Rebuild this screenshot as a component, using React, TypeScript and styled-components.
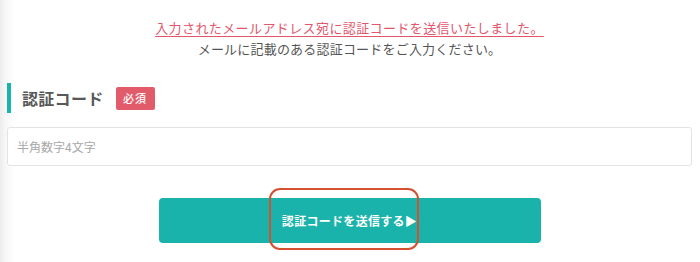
import styled, { createGlobalStyle } from 'styled-components';

const GlobalStyle = createGlobalStyle`
  html, body {
    margin: 0;
    padding: 0;
    background: #fff;
  }
  body {
    font-family: "Noto Sans CJK JP", "Noto Sans", sans-serif;
    color: #555;
  }
`;

const Page = styled.div`
  width: 700px;
  height: 262px;
  box-sizing: border-box;
  padding: 17px 8px 0 7px;
  background: linear-gradient(to right, #ececec 0px, #f8f8f8 6px, #fff 16px);
  overflow: hidden;
`;

const Notice = styled.div`
  display: flex;
  flex-direction: column;
  align-items: center;
  font-size: 13px;
  line-height: 21px;
`;

const SentText = styled.p`
  margin: 0;
  color: #e2566c;
  text-decoration: underline;
  text-underline-offset: 3px;
  text-decoration-thickness: 1px;
  letter-spacing: 0.4px;
`;

const HintText = styled.p`
  margin: 0;
  color: #555;
  letter-spacing: 0.2px;
`;

const Heading = styled.div`
  display: flex;
  align-items: center;
  margin-top: 24px;
  height: 30px;
  border-left: 4px solid #1ab3ab;
  padding-left: 11px;
  gap: 12px;
`;

const HeadingLabel = styled.h2`
  margin: 0;
  font-size: 16px;
  font-weight: 700;
  color: #585858;
  letter-spacing: 0.3px;
`;

const Badge = styled.span`
  display: inline-flex;
  align-items: center;
  justify-content: center;
  width: 39px;
  height: 23px;
  border-radius: 2px;
  background: #e25b6b;
  color: #fff;
  font-size: 11px;
  font-weight: 500;
  letter-spacing: 1px;
`;

const CodeInput = styled.input`
  display: block;
  box-sizing: border-box;
  width: 100%;
  height: 39px;
  margin-top: 14px;
  padding: 0 9px;
  border: 1px solid #e3e3e3;
  border-radius: 3px;
  font-family: inherit;
  font-size: 12px;
  color: #555;
  outline: none;
  &::placeholder {
    color: #a8a8a8;
  }
`;

const ButtonRow = styled.div`
  display: flex;
  justify-content: center;
  margin-top: 32px;
`;

const SubmitButton = styled.button`
  position: relative;
  width: 382px;
  height: 45px;
  border: none;
  border-radius: 4px;
  background: #1ab3ab;
  color: #fff;
  font-family: inherit;
  font-size: 12px;
  font-weight: 700;
  letter-spacing: 0.3px;
  cursor: pointer;
`;

const Highlight = styled.span`
  position: absolute;
  left: 110px;
  top: -10px;
  width: 150px;
  height: 62px;
  box-sizing: border-box;
  border: 2px solid #d4502f;
  border-radius: 11px;
  pointer-events: none;
`;

export default function App() {
  return (
    <>
      <GlobalStyle />
      <Page>
        <Notice>
          <SentText>入力されたメールアドレス宛に認証コードを送信いたしました。</SentText>
          <HintText>メールに記載のある認証コードをご入力ください。</HintText>
        </Notice>
        <Heading>
          <HeadingLabel>認証コード</HeadingLabel>
          <Badge>必須</Badge>
        </Heading>
        <CodeInput type="text" placeholder="半角数字4文字" />
        <ButtonRow>
          <SubmitButton type="button">
            認証コードを送信する▶
            <Highlight />
          </SubmitButton>
        </ButtonRow>
      </Page>
    </>
  );
}
